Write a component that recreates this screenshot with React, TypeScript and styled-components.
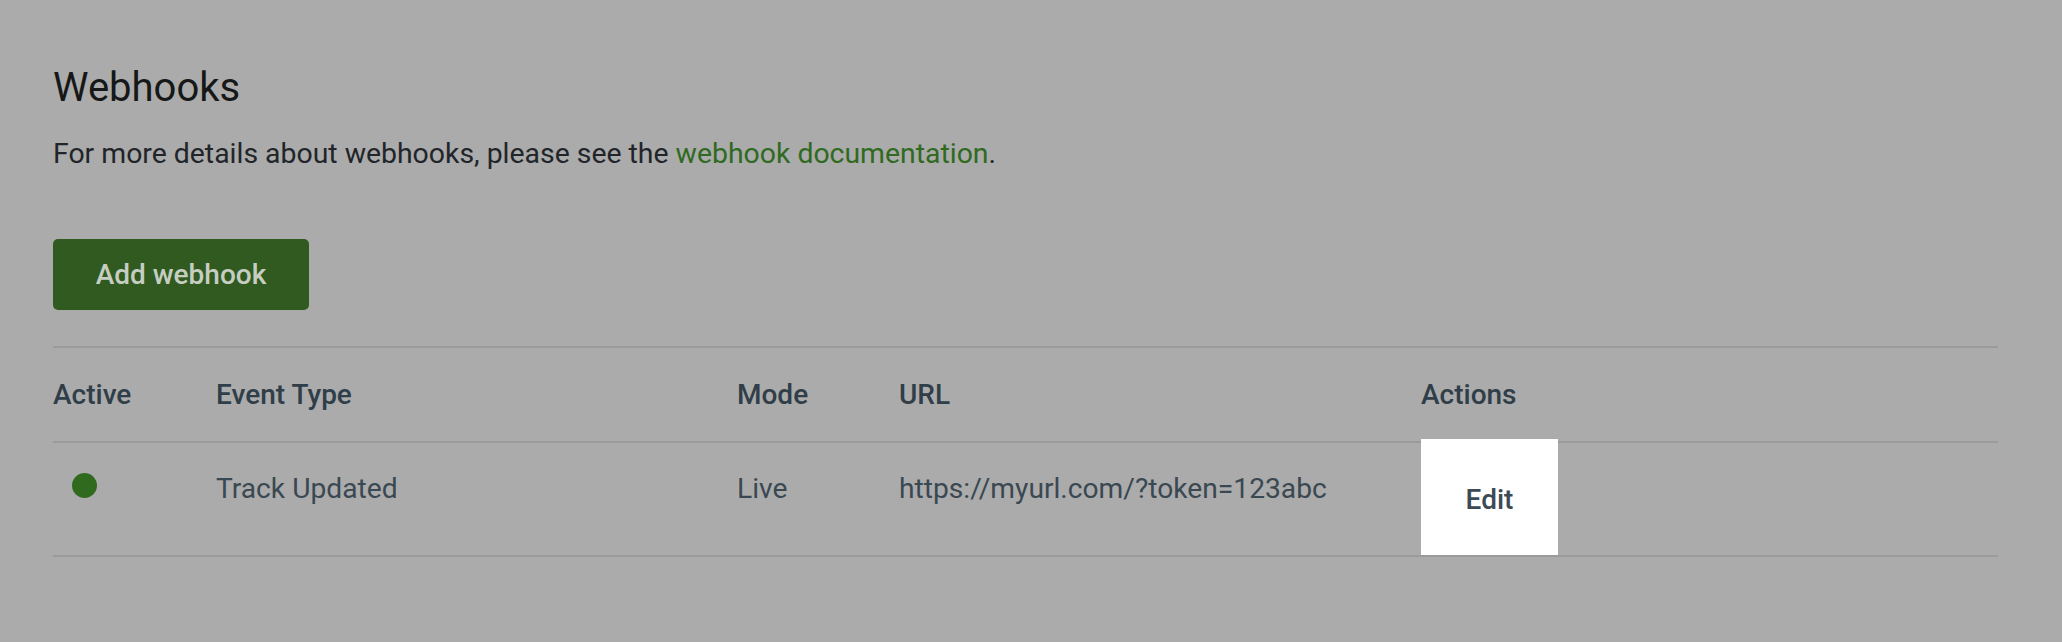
import React from "react";
import styled, { createGlobalStyle } from "styled-components";

const Global = createGlobalStyle`
  html, body { margin: 0; padding: 0; background: #ababab; }
  body { font-family: Roboto, "Noto Sans", "Liberation Sans", sans-serif; }
  * { box-sizing: border-box; }
`;

const Page = styled.div`
  width: 2062px;
  height: 642px;
  padding: 64px 0 0 53px;
  background: #ababab;
`;

const Title = styled.h1`
  margin: 0;
  font-size: 40px;
  line-height: 48px;
  font-weight: 400;
  color: #161717;
`;

const Intro = styled.p`
  margin: 24px 0 0;
  font-size: 28.4px;
  line-height: 36px;
  color: #212529;
`;

const DocLink = styled.a`
  color: #2f6a1f;
  text-decoration: none;
`;

const AddButton = styled.button`
  display: block;
  margin-top: 67px;
  width: 256px;
  height: 71px;
  border: none;
  border-radius: 5px;
  background: #305a20;
  color: #c6cec2;
  font-family: inherit;
  font-size: 28px;
  font-weight: 500;
  cursor: pointer;
`;

const Table = styled.div`
  margin-top: 36px;
  width: 1945px;
  border-top: 2px solid #9b9b9b;
`;

const Row = styled.div<{ $head?: boolean }>`
  display: grid;
  grid-template-columns: 163px 521px 162px 522px 1fr;
  height: ${(p) => (p.$head ? 95 : 114)}px;
  border-bottom: 2px solid #9b9b9b;
  align-items: ${(p) => (p.$head ? "center" : "start")};
`;

const HeadCell = styled.div`
  font-size: 28px;
  line-height: 36px;
  font-weight: 500;
  color: #2f3e48;
`;

const Cell = styled.div`
  padding-top: 28px;
  font-size: 28.2px;
  line-height: 36px;
  color: #3a4852;
`;

const DotCell = styled.div`
  padding: 30px 0 0 19px;
`;

const Dot = styled.span`
  display: block;
  width: 25px;
  height: 25px;
  border-radius: 50%;
  background: #2f6a1e;
`;

const EditButton = styled.button`
  margin-top: -4px;
  width: 137px;
  height: 116px;
  padding: 5px 0 0;
  border: none;
  background: #ffffff;
  color: #3b4a54;
  font-family: inherit;
  font-size: 28px;
  font-weight: 500;
  cursor: pointer;
`;

export default function App() {
  return (
    <>
      <Global />
      <Page>
        <Title>Webhooks</Title>
        <Intro>
          For more details about webhooks, please see the{" "}
          <DocLink href="#">webhook documentation</DocLink>.
        </Intro>
        <AddButton>Add webhook</AddButton>
        <Table>
          <Row $head>
            <HeadCell>Active</HeadCell>
            <HeadCell>Event Type</HeadCell>
            <HeadCell>Mode</HeadCell>
            <HeadCell>URL</HeadCell>
            <HeadCell>Actions</HeadCell>
          </Row>
          <Row>
            <DotCell>
              <Dot />
            </DotCell>
            <Cell>Track Updated</Cell>
            <Cell>Live</Cell>
            <Cell>https://myurl.com/?token=123abc</Cell>
            <div>
              <EditButton>Edit</EditButton>
            </div>
          </Row>
        </Table>
      </Page>
    </>
  );
}
